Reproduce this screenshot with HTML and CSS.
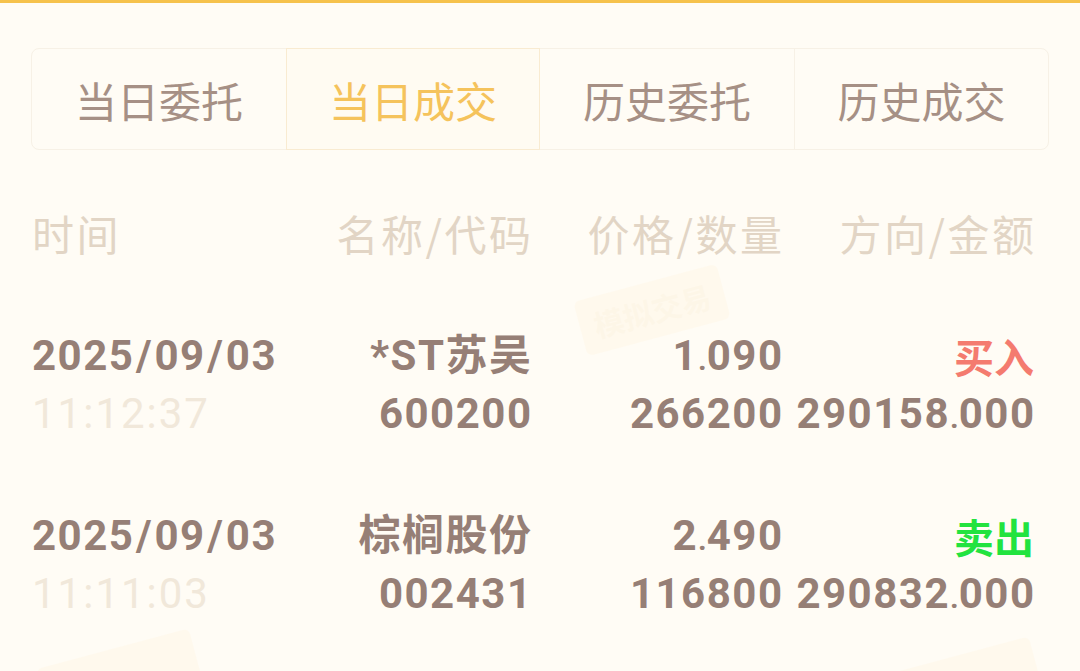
FILE: index.html
```html
<!DOCTYPE html>
<html lang="zh-CN">
<head>
<meta charset="utf-8">
<link rel="stylesheet" href="styles.css">
</head>
<body>
<div class="topbar"></div>
<div class="tabs">
  <div class="tab">当日委托</div>
  <div class="tab active">当日成交</div>
  <div class="tab sep">历史委托</div>
  <div class="tab">历史成交</div>
</div>
<div class="table">
  <div class="row head">
    <div class="c1">时间</div>
    <div class="c2">名称/代码</div>
    <div class="c3">价格/数量</div>
    <div class="c4">方向/金额</div>
  </div>
  <div class="row item">
    <div class="c1"><div class="num">2025<span class="sl">/</span>09<span class="sl">/</span>03</div><div class="time">11:12:37</div></div>
    <div class="c2"><div class="num">*ST苏吴</div><div class="num">600200</div></div>
    <div class="c3"><div class="num">1<span class="dot">.</span>090</div><div class="num">266200</div></div>
    <div class="c4"><div class="buy">买入</div><div class="num">290158<span class="dot">.</span>000</div></div>
  </div>
  <div class="row item">
    <div class="c1"><div class="num">2025<span class="sl">/</span>09<span class="sl">/</span>03</div><div class="time">11:11:03</div></div>
    <div class="c2"><div class="num">棕榈股份</div><div class="num">002431</div></div>
    <div class="c3"><div class="num">2<span class="dot">.</span>490</div><div class="num">116800</div></div>
    <div class="c4"><div class="sell">卖出</div><div class="num">290832<span class="dot">.</span>000</div></div>
  </div>
</div>
<div class="wm wm1">模拟交易</div>
<div class="wm wm2"></div>
<div class="wm wm3"></div>
</body>
</html>
```
FILE: styles.css
```css
html, body {
  margin: 0;
  padding: 0;
}
body {
  width: 1080px;
  height: 671px;
  overflow: hidden;
  background: #fffcf5;
  font-family: Roboto, "Noto Sans CJK SC", sans-serif;
  position: relative;
}
.topbar {
  height: 3px;
  background: #f6c24c;
}
.tabs {
  margin: 45px 31px 0 31px;
  height: 100px;
  border: 1px solid #f7f1e6;
  border-radius: 8px;
  display: grid;
  grid-template-columns: 254px 254px 255px 1fr;
}
.tab {
  display: flex;
  align-items: center;
  justify-content: center;
  font-family: "Noto Sans CJK SC", sans-serif;
  font-size: 42px;
  color: #a69085;
}
.tab.active {
  color: #f5c35c;
  background: #fffbf2;
  border: 1px solid #f9ebd1;
  margin: -1px 0;
}
.tab.sep {
  border-right: 1px solid #f7f1e6;
}
.table {
  padding: 53px 46px 0 32px;
}
.row {
  display: grid;
  grid-template-columns: 248px 251px 251px 252px;
}
.head {
  height: 62px;
  line-height: 60px;
  font-family: "Noto Sans CJK SC", sans-serif;
  font-size: 42px;
  letter-spacing: 2.5px;
  color: #e2d5c5;
  margin-bottom: 62px;
}
.head .c2, .head .c3, .head .c4 {
  margin-right: -2.5px;
}
.item {
  line-height: 58px;
  margin-bottom: 64px;
}
.c1 { text-align: left; }
.c2, .c3, .c4 { text-align: right; }
.num {
  height: 58px;
  font-size: 42px;
  font-weight: 700;
  color: #967f76;
  letter-spacing: 1.5px;
}
.c2 .num, .c3 .num, .c4 .num {
  margin-right: -1.5px;
}
.num .dot {
  font-size: 30px;
  line-height: 0;
  letter-spacing: 0;
}
.num .sl {
  margin: 0 1.5px;
}
.time {
  font-size: 42px;
  color: #f1e8da;
  letter-spacing: 2px;
}
.buy, .sell {
  font-family: "Noto Sans CJK SC", sans-serif;
  font-size: 40px;
  font-weight: 700;
}
.buy { color: #f47b6f; }
.sell { color: #22e33f; }
.wm {
  position: absolute;
  font-family: "Noto Sans CJK SC", sans-serif;
  font-size: 30px;
  font-weight: 700;
  color: rgba(250, 238, 215, 0.25);
  background: rgba(255, 247, 228, 0.45);
  padding: 6px 14px;
  border-radius: 6px;
  transform: rotate(-15deg);
  pointer-events: none;
}
.wm1 { left: 578px; top: 282px; }
.wm2 { left: 40px; top: 648px; width: 130px; height: 40px; }
.wm3 { left: 880px; top: 656px; width: 130px; height: 40px; }
```
